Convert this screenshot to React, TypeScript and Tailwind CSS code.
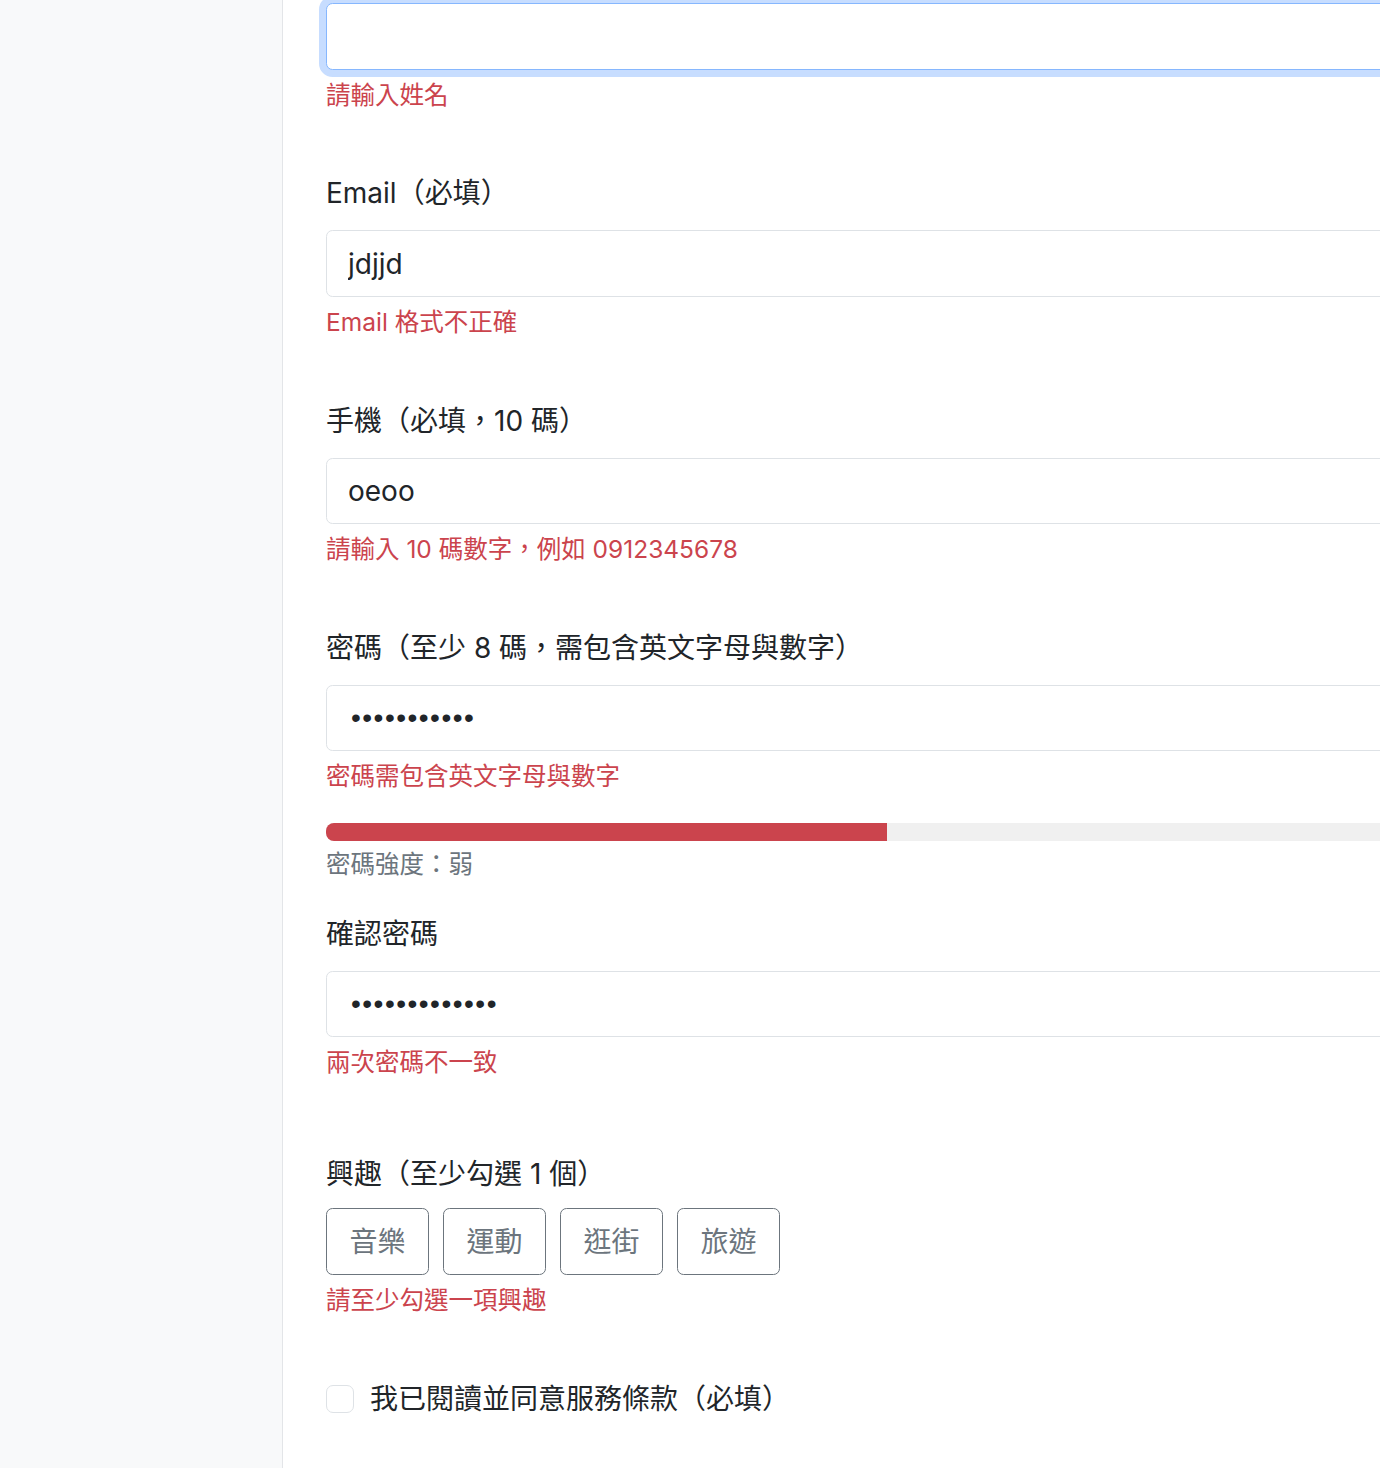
import React from 'react';

const font = { fontFamily: 'Inter, "Noto Sans CJK TC", sans-serif' };
const dotFont = { fontFamily: '"Liberation Sans", sans-serif' };

const Label: React.FC<{ children: React.ReactNode; className?: string }> = ({ children, className = '' }) => (
    <div className={`text-[28px] leading-[42px] text-[#212529] mb-[16px] ${className}`}>{children}</div>
);

const Feedback: React.FC<{ children: React.ReactNode; className?: string }> = ({ children, className = '' }) => (
    <div className={`mt-[7px] text-[24.5px] leading-[36.75px] text-[#cb444d] ${className}`}>{children}</div>
);

const TextBox: React.FC<{ value: string; type?: string; focused?: boolean }> = ({ value, type = 'text', focused }) => {
    const isPassword = type === 'password';
    return (
        <input
            type={type}
            value={value}
            readOnly
            className={`block w-[1200px] h-[66.5px] px-[21px] rounded-[6.5px] bg-white text-[28px] text-[#212529] outline-none border-[1.75px] ${
                focused ? 'border-[#86b7fe] shadow-[0_0_0_7px_rgba(13,110,253,0.23)]' : 'border-[#dee2e6]'
            } ${isPassword ? 'tracking-[1.5px] pl-[24px]' : ''}`}
            style={isPassword ? dotFont : font}
        />
    );
};

const interests = ['音樂', '運動', '逛街', '旅遊'];

export default function App() {
    return (
        <div className="flex h-[1468px] overflow-hidden bg-white" style={font}>
            <aside className="w-[283px] shrink-0 bg-[#f8f9fa] border-r border-[#e3e5e8]" />
            <main className="flex-1 overflow-hidden pl-[43px] pt-[3px]">
                {/* 姓名 */}
                <TextBox value="" focused />
                <Feedback>請輸入姓名</Feedback>

                {/* Email */}
                <Label className="mt-[59px]">Email（必填）</Label>
                <TextBox value="jdjjd" />
                <Feedback>Email 格式不正確</Feedback>

                {/* 手機 */}
                <Label className="mt-[59px]">手機（必填，10 碼）</Label>
                <TextBox value="oeoo" />
                <Feedback>請輸入 10 碼數字，例如 0912345678</Feedback>

                {/* 密碼 */}
                <Label className="mt-[59px]">密碼（至少 8 碼，需包含英文字母與數字）</Label>
                <TextBox value="abcdefghijk" type="password" />
                <Feedback>密碼需包含英文字母與數字</Feedback>

                <div className="mt-[28px] w-[1200px] h-[18px] rounded-[8px] bg-[#f0f0f0] overflow-hidden">
                    <div className="h-full w-[561px] bg-[#cb444d]" />
                </div>
                <div className="mt-[5px] text-[24.5px] leading-[36.75px] text-[#6c757d]">密碼強度：弱</div>

                {/* 確認密碼 */}
                <Label className="mt-[30px]">確認密碼</Label>
                <TextBox value="abcdefghijklm" type="password" />
                <Feedback>兩次密碼不一致</Feedback>

                {/* 興趣 */}
                <Label className="mt-[72px] !mb-[13px]">興趣（至少勾選 1 個）</Label>
                <div className="flex gap-[14px]">
                    {interests.map((item) => (
                        <button
                            key={item}
                            type="button"
                            className="h-[67px] w-[103px] rounded-[6.5px] border-[1.75px] border-[#6c757d] bg-white text-[28px] text-[#6c757d]"
                            style={font}
                        >
                            {item}
                        </button>
                    ))}
                </div>
                <Feedback>請至少勾選一項興趣</Feedback>

                {/* 條款 */}
                <div className="mt-[59px] flex items-center gap-[16px]">
                    <span className="block w-[28px] h-[28px] rounded-[7px] border-[1.75px] border-[#dee2e6] bg-white" />
                    <span className="text-[28px] leading-[42px] text-[#212529]">我已閱讀並同意服務條款（必填）</span>
                </div>
            </main>
        </div>
    );
}
